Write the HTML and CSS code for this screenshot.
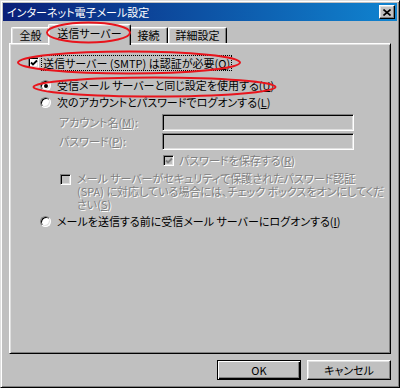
FILE: index.html
```html
<!DOCTYPE html>
<html lang="ja">
<head>
<meta charset="utf-8">
<title>インターネット電子メール設定</title>
<link rel="stylesheet" href="styles.css">
</head>
<body>
<div class="window">
  <div class="titlebar">
    <span class="title">インターネット電子メール設定</span>
    <span class="close"><svg width="8" height="7" viewBox="0 0 8 7"><path d="M0.5 0.5 L7.5 6.5 M7.5 0.5 L0.5 6.5" stroke="#000" stroke-width="1.6"/></svg></span>
  </div>
  <div class="tabs">
    <div class="tab t1">全般</div>
    <div class="tab active">送信サーバー</div>
    <div class="tab t3">接続</div>
    <div class="tab t4">詳細設定</div>
  </div>
  <div class="panel">
    <div class="row r-smtp">
      <span class="check"><svg width="8" height="8" viewBox="0 0 8 8"><path d="M1 3.5 L3 5.5 L7 1.5" fill="none" stroke="#000" stroke-width="1.8"/></svg></span>
      <span class="label focus">送信サーバー (SMTP) は認証が必要(<u>O</u>)</span>
    </div>
    <div class="row r-radio1">
      <span class="radio on"></span>
      <span class="label">受信メール サーバーと同じ設定を使用する(<u>U</u>)</span>
    </div>
    <div class="row r-radio2">
      <span class="radio"></span>
      <span class="label">次のアカウントとパスワードでログオンする(<u>L</u>)</span>
    </div>
    <div class="row r-field r-account">
      <span class="label dis field-label">アカウント名(<u>M</u>):</span>
      <span class="textbox"></span>
    </div>
    <div class="row r-field r-pass">
      <span class="label dis field-label">パスワード(<u>P</u>):</span>
      <span class="textbox"></span>
    </div>
    <div class="row r-save">
      <span class="check dis-box"><svg width="8" height="8" viewBox="0 0 8 8"><path d="M1 3.5 L3 5.5 L7 1.5" fill="none" stroke="#808080" stroke-width="1.8"/></svg></span>
      <span class="label dis">パスワードを保存する(<u>R</u>)</span>
    </div>
    <div class="r-spa">
      <span class="check dis-box"></span>
      <div class="dis multi">
        <div>メール サーバーがセキュリティで保護されたパスワード認証</div>
        <div>(SPA) に対応している場合には、チェック ボックスをオンにしてくだ</div>
        <div>さい(<u>S</u>)</div>
      </div>
    </div>
    <div class="row r-radio3">
      <span class="radio"></span>
      <span class="label">メールを送信する前に受信メール サーバーにログオンする(<u>I</u>)</span>
    </div>
  </div>
  <div class="buttons">
    <button class="btn default">OK</button>
    <button class="btn">キャンセル</button>
  </div>
</div>
<svg class="annot" width="400" height="388" viewBox="0 0 400 388">
  <ellipse cx="88.5" cy="32.5" rx="41.5" ry="10" />
  <ellipse cx="129" cy="62.5" rx="111" ry="11" />
  <ellipse cx="154.5" cy="87" rx="121" ry="9.5" />
</svg>
</body>
</html>
```

FILE: styles.css
```css
* { box-sizing: border-box; }
html, body { margin: 0; padding: 0; }
body {
  position: relative;
  width: 400px;
  height: 388px;
  overflow: hidden;
  background: #c0c0c0;
  color: #000;
  font-family: "Noto Sans CJK JP", "Noto Sans", sans-serif;
  font-size: 11px;
  font-feature-settings: "palt";
  line-height: 13px;
}
.window {
  width: 400px;
  height: 388px;
  background: #c0c0c0;
  border: 1px solid;
  border-color: #dfdfdf #000 #000 #dfdfdf;
  box-shadow: inset 1px 1px 0 #fff, inset -1px -1px 0 #808080;
  padding: 2px;
  display: flex;
  flex-direction: column;
}
.titlebar {
  height: 18px;
  flex: none;
  display: flex;
  align-items: center;
  padding: 0 2px 0 4px;
  background: linear-gradient(to right, #0a1f78, #1084d0);
  color: #fff;
}
.title { line-height: 18px; }
.close {
  margin-left: auto;
  width: 16px;
  height: 14px;
  display: flex;
  align-items: center;
  justify-content: center;
  background: #c0c0c0;
  border: 1px solid;
  border-color: #fff #000 #000 #fff;
  box-shadow: inset -1px -1px 0 #808080, inset 1px 1px 0 #dfdfdf;
}
.tabs {
  flex: none;
  height: 22px;
  margin: 0 6px;
  padding: 0 0 0 2px;
  display: flex;
  align-items: flex-end;
  position: relative;
  z-index: 2;
}
.tab {
  height: 16px;
  line-height: 14px;
  text-align: center;
  background: #c0c0c0;
  border-top: 1px solid #fff;
  border-left: 1px solid #fff;
  border-right: 1px solid #000;
  border-radius: 2px 2px 0 0;
  box-shadow: inset -1px 0 0 #808080, inset 1px 1px 0 #dfdfdf;
}
.t1 { width: 39px; }
.t3 { width: 39px; }
.t4 { width: 59px; }
.tab.active {
  width: 83px;
  height: 21px;
  margin: 0 -2px -2px -2px;
  padding-top: 1px;
  position: relative;
  z-index: 3;
}
.panel {
  flex: 1;
  margin: 0 6px;
  position: relative;
  z-index: 1;
  border: 1px solid;
  border-color: #fff #000 #000 #fff;
  box-shadow: inset 1px 1px 0 #dfdfdf, inset -1px -1px 0 #808080;
  padding: 10px 8px 0 18px;
}
.row {
  display: flex;
  align-items: center;
  height: 17px;
  white-space: nowrap;
}
.r-radio1 { margin: 6px 0 0 12px; }
.r-radio2 { margin: 0 0 0 12px; }
.r-account { margin: 3px 0 0 31px; }
.r-pass { margin: 2px 0 0 31px; }
.r-save { margin: 2px 0 0 135px; }
.r-spa {
  display: grid;
  grid-template-columns: 11px auto;
  column-gap: 6px;
  align-items: start;
  justify-content: start;
  margin: 3px 0 0 32px;
  white-space: nowrap;
}
.r-radio3 { margin: 2px 0 0 12px; }

.check {
  width: 11px;
  height: 11px;
  flex: none;
  margin-right: 3px;
  display: flex;
  align-items: center;
  justify-content: center;
  background: #fff;
  border: 1px solid;
  border-color: #808080 #fff #fff #808080;
  box-shadow: inset 1px 1px 0 #000, inset -1px -1px 0 #dfdfdf;
}
.check.dis-box { background: #c0c0c0; margin-right: 5px; }
.r-spa .check { margin: 2px 0 0 0; }
.radio {
  width: 11px;
  height: 11px;
  flex: none;
  margin-right: 6px;
  border-radius: 50%;
  background: #fff;
  border: 1px solid;
  border-color: #808080 #fff #fff #808080;
  box-shadow: inset 1px 1px 0 #000, inset -1px -1px 0 #dfdfdf;
  display: flex;
  align-items: center;
  justify-content: center;
}
.radio.on::after {
  content: "";
  width: 4px;
  height: 4px;
  border-radius: 50%;
  background: #000;
}
u { text-decoration: underline; text-underline-offset: 1px; }
.focus {
  outline: 1px dotted #000;
  padding: 0 1px;
  line-height: 14px;
}
.dis {
  color: #808080;
  text-shadow: 1px 1px 0 #fff;
}
.multi { line-height: 13px; }
.field-label { width: 103px; flex: none; }
.textbox {
  width: 192px;
  height: 17px;
  background: #c0c0c0;
  border: 1px solid;
  border-color: #808080 #fff #fff #808080;
  box-shadow: inset 1px 1px 0 #000, inset -1px -1px 0 #dfdfdf;
}
.buttons {
  flex: none;
  display: flex;
  justify-content: flex-end;
  gap: 6px;
  margin: 6px 6px 5px;
}
.btn {
  width: 84px;
  height: 20px;
  padding: 0;
  font: inherit;
  color: #000;
  background: #c0c0c0;
  border: 1px solid;
  border-color: #fff #000 #000 #fff;
  box-shadow: inset -1px -1px 0 #808080, inset 1px 1px 0 #dfdfdf;
  line-height: 16px;
}
.btn.default {
  border: 1px solid #000;
  box-shadow: inset 1px 1px 0 #fff, inset -1px -1px 0 #000, inset -2px -2px 0 #808080;
}
.annot {
  position: absolute;
  left: 0;
  top: 0;
  pointer-events: none;
  z-index: 10;
}
.annot ellipse {
  fill: none;
  stroke: #e8141c;
  stroke-width: 2;
}
```
